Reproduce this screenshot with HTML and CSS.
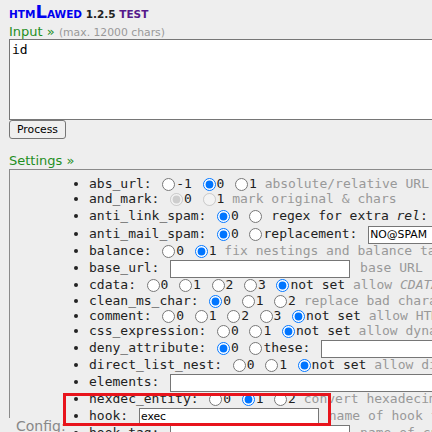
FILE: index.html
```html
<!DOCTYPE html>
<html>
<head>
<meta charset="utf-8">
<title>htmLawed 1.2.5 test</title>
<link rel="stylesheet" href="styles.css">
</head>
<body>
<div class="page">
  <div class="hdr"><a class="brand"><span class="sc">htm</span><span class="big">L</span><span class="sc">awed</span></a> <span class="ver">1.2.5</span> <a class="test">test</a></div>
  <div class="lbl">Input » <span class="note">(max. 12000 chars)</span></div>
  <textarea class="input">id</textarea>
  <button class="btn" type="button">Process</button>
  <div class="lbl sect">Settings »</div>
  <div class="settings">
    <ul class="opts">
      <li class="h14">abs_url: <input type="radio" name="abs_url">-1 <input type="radio" name="abs_url" checked>0 <input type="radio" name="abs_url">1 <span class="d">absolute/relative URL conversion</span></li>
      <li class="h16">and_mark: <input type="radio" name="and_mark" checked disabled>0 <input type="radio" name="and_mark" disabled>1 <span class="d">mark original &amp; chars</span></li>
      <li class="h18">anti_link_spam: <input type="radio" name="als" checked>0 <input type="radio" name="als"> regex for extra <i>rel</i>: <input class="t" type="text"> regex for no <i>href</i>: <input class="t" type="text"></li>
      <li class="h18">anti_mail_spam: <input type="radio" name="ams" checked>0 <input type="radio" name="ams">replacement: <input class="t" type="text" value="NO@SPAM"></li>
      <li class="h16">balance: <input type="radio" name="balance">0 <input type="radio" name="balance" checked>1 <span class="d">fix nestings and balance tags</span></li>
      <li class="h17">base_url: <input class="t" type="text"> <span class="d">base URL</span></li>
      <li class="h17">cdata: <input type="radio" name="cdata">0 <input type="radio" name="cdata">1 <input type="radio" name="cdata">2 <input type="radio" name="cdata">3 <input type="radio" name="cdata" checked>not set <span class="d">allow <i>CDATA</i> sections</span></li>
      <li class="h15">clean_ms_char: <input type="radio" name="cmc" checked>0 <input type="radio" name="cmc">1 <input type="radio" name="cmc">2 <span class="d">replace bad characters introduced by Microsoft Office</span></li>
      <li class="h15">comment: <input type="radio" name="comment">0 <input type="radio" name="comment">1 <input type="radio" name="comment">2 <input type="radio" name="comment">3 <input type="radio" name="comment" checked>not set <span class="d">allow HTML comments</span></li>
      <li class="h16">css_expression: <input type="radio" name="cssx">0 <input type="radio" name="cssx">1 <input type="radio" name="cssx" checked>not set <span class="d">allow dynamic CSS expression</span></li>
      <li class="h17">deny_attribute: <input type="radio" name="deny" checked>0 <input type="radio" name="deny">these: <input class="t wide" type="text"></li>
      <li class="h17">direct_list_nest: <input type="radio" name="dln">0 <input type="radio" name="dln">1 <input type="radio" name="dln" checked>not set <span class="d">allow direct nesting of a list within another without requiring it to be a list item</span></li>
      <li class="h18">elements: <input class="t wide" type="text"> <span class="d">allowed elements</span></li>
      <li class="h16">hexdec_entity: <input type="radio" name="hex">0 <input type="radio" name="hex" checked>1 <input type="radio" name="hex">2 <span class="d">convert hexadecimal numerical entities to decimal ones, or vice versa</span></li>
      <li class="h17">hook: <input class="t" type="text" value="exec"> <span class="d">name of hook function</span></li>
      <li class="h18">hook_tag: <input class="t" type="text"> <span class="d">name of custom function to further check attribute values</span></li>
    </ul>
  </div>
  <div class="config">Config:</div>
</div>
<div class="mark"></div>
</body>
</html>
```

FILE: styles.css
```css
html, body {
  margin: 0;
  padding: 0;
  background: #eeeeee;
  overflow: hidden;
}
body {
  width: 432px;
  height: 432px;
  font-family: "DejaVu Sans", sans-serif;
  color: #222222;
}
.page {
  padding-left: 9px;
}
.hdr {
  height: 23px;
  padding-top: 1px;
  font-weight: bold;
  font-size: 10.5px;
  white-space: nowrap;
}
.brand {
  color: #0000ee;
  text-transform: uppercase;
  text-decoration: none;
}
.big {
  font-size: 18px;
}
.ver {
  color: #222222;
}
.test {
  color: #551a8b;
  text-transform: uppercase;
}
.lbl {
  height: 15px;
  line-height: 15px;
  font-size: 13px;
  color: #1f8f1f;
  white-space: nowrap;
}
.note {
  font-size: 10.8px;
  color: #999999;
}
.input {
  display: block;
  box-sizing: border-box;
  width: 700px;
  height: 81px;
  margin: 0;
  padding: 2px;
  border: 1px solid #767676;
  background: #ffffff;
  font: 13px/normal "DejaVu Sans Mono", monospace;
  color: #000000;
  resize: none;
}
.btn {
  display: block;
  box-sizing: border-box;
  height: 19px;
  margin: 0;
  padding: 0 7px;
  border: 1px solid #767676;
  border-radius: 3px;
  background: #efefef;
  font: 10.8px "DejaVu Sans", sans-serif;
  color: #000000;
}
.sect {
  margin-top: 14px;
}
.settings {
  margin-top: 1px;
  box-sizing: border-box;
  width: 800px;
  height: 249px;
  border-top: 1px solid #8a8a8a;
  border-left: 1px solid #8a8a8a;
}
.opts {
  margin: 0;
  padding: 7px 0 0 79px;
  font-family: "DejaVu Sans Mono", monospace;
  font-size: 13px;
  color: #222222;
  white-space: nowrap;
}
.opts li { overflow: visible; }
.h14 { height: 14px; line-height: 14px; }
.h15 { height: 15px; line-height: 15px; }
.h16 { height: 16px; line-height: 16px; }
.h17 { height: 17px; line-height: 17px; }
.h18 { height: 18px; line-height: 18px; }
.opts input[type="radio"] {
  width: 13px;
  height: 13px;
  margin: 0 1px 0 2.8px;
  vertical-align: middle;
}
.t {
  box-sizing: border-box;
  width: 180px;
  height: 18px;
  margin: 0 2px 0 3px;
  padding: 0 1px;
  border: 1px solid #767676;
  background: #ffffff;
  font: 10.8px "DejaVu Sans", sans-serif;
  color: #000000;
  vertical-align: middle;
}
.wide {
  width: 320px;
}
.d {
  color: #999999;
}
.config {
  padding-left: 7px;
  height: 16px;
  line-height: 16px;
  font-size: 14px;
  color: #888888;
}
.mark {
  position: absolute;
  left: 63px;
  top: 393px;
  width: 268px;
  height: 33px;
  box-sizing: border-box;
  border: 3px solid #e8141c;
}
```
